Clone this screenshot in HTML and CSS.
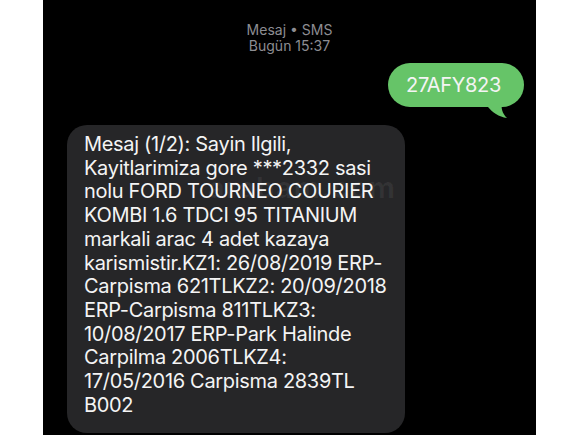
FILE: index.html
```html
<!DOCTYPE html>
<html lang="tr">
  <head>
    <meta charset="UTF-8" />
    <meta name="viewport" content="width=device-width, initial-scale=1.0" />
    <title>Mesaj</title>
    <link rel="stylesheet" href="styles.css">
  </head>
  <body>
    <main class="screen">
      <header class="thread-info">
        <p>Mesaj &bull; SMS</p>
        <p>Bugün 15:37</p>
      </header>

      <div class="msg msg-out">
        <span>27AFY823</span>
        <svg class="tail" width="26" height="16" viewBox="0 0 26 16">
          <path d="M0 0 L18 0 C17 5 18 10 23 15 C15 14 8 9 4 4 Z" fill="#66c468" />
        </svg>
      </div>

      <div class="msg msg-in">
        Mesaj (1/2): Sayin Ilgili,<br>
        Kayitlarimiza gore ***2332 sasi<br>
        nolu FORD TOURNEO COURIER<br>
        KOMBI 1.6 TDCI 95 TITANIUM<br>
        markali arac 4 adet kazaya<br>
        karismistir.KZ1: 26/08/2019 ERP-<br>
        Carpisma 621TLKZ2: 20/09/2018<br>
        ERP-Carpisma 811TLKZ3:<br>
        10/08/2017 ERP-Park Halinde<br>
        Carpilma 2006TLKZ4:<br>
        17/05/2016 Carpisma 2839TL<br>
        B002
      </div>

      <!-- watermark from the original photo -->
      <div class="watermark">arabam.com</div>
    </main>
  </body>
</html>
```

FILE: styles.css
```css
body {
  margin: 0;
  padding: 0;
  background-color: #fff;
  font-family: Inter, "Noto Sans", sans-serif;
}
.screen {
  position: relative;
  width: 493px;
  height: 435px;
  margin-left: 43px;
  background-color: #000;
  padding-top: 22px;
  box-sizing: border-box;
  overflow: hidden;
}
.thread-info {
  text-align: center;
  color: #8d8d92;
  font-size: 14px;
  line-height: 16px;
}
.thread-info p {
  margin: 0;
}
.msg {
  color: #f4f4f4;
  font-size: 20px;
  letter-spacing: -0.32px;
}
.msg-out {
  position: relative;
  width: max-content;
  margin: 9px 12px 0 auto;
  padding: 0 23px 0 18px;
  height: 44px;
  line-height: 44px;
  border-radius: 22px;
  background-color: #66c468;
}
.msg-out span {
  position: relative;
  z-index: 1;
}
.tail {
  position: absolute;
  left: 96px;
  top: 40px;
}
.msg-in {
  width: 338px;
  box-sizing: border-box;
  margin: 18px 0 0 24px;
  padding: 8px 10px 16px 17px;
  line-height: 23.7px;
  white-space: nowrap;
  border-radius: 20px;
  background-color: #262628;
}
.watermark {
  position: absolute;
  left: 165px;
  top: 170px;
  font-size: 29px;
  font-weight: 700;
  letter-spacing: 1px;
  color: rgba(255, 255, 255, 0.06);
  pointer-events: none;
}
```
